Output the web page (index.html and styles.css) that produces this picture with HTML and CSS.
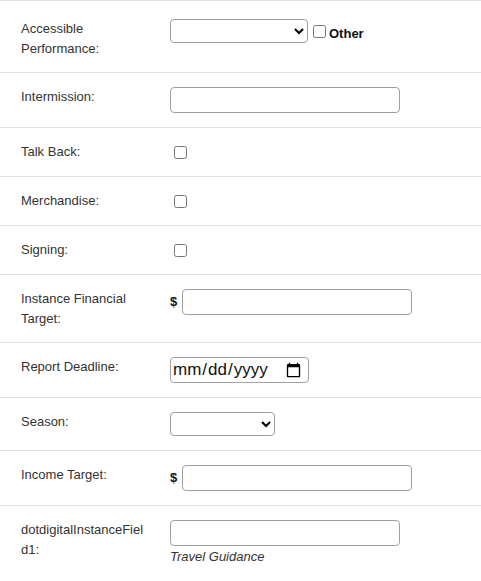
FILE: index.html
```html
<!DOCTYPE html>
<html lang="en">
<head>
   <meta charset="UTF-8">
   <meta name="viewport" content="width=device-width, initial-scale=1.0">
   <title>Instance Details</title>
   <link rel="stylesheet" href="styles.css">
</head>

<body>

   <!-- Instance fields -->
   <table class="fields">
       <tr class="first-row">
           <td class="label">Accessible Performance:</td>
           <td class="control">
               <select class="select-wide"><option></option></select><input type="checkbox" id="other" class="other-check"><label for="other" class="other">Other</label>
           </td>
       </tr>
       <tr>
           <td class="label">Intermission:</td>
           <td class="control"><input type="text" class="text-field"></td>
       </tr>
       <tr>
           <td class="label">Talk Back:</td>
           <td class="control"><input type="checkbox"></td>
       </tr>
       <tr>
           <td class="label">Merchandise:</td>
           <td class="control"><input type="checkbox"></td>
       </tr>
       <tr>
           <td class="label">Signing:</td>
           <td class="control"><input type="checkbox"></td>
       </tr>
       <tr>
           <td class="label">Instance Financial Target:</td>
           <td class="control"><span class="currency">$</span> <input type="text" class="text-field money"></td>
       </tr>
       <tr>
           <td class="label">Report Deadline:</td>
           <td class="control"><input type="date" class="date-field"></td>
       </tr>
       <tr>
           <td class="label">Season:</td>
           <td class="control"><select class="select-small"><option></option></select></td>
       </tr>
       <tr>
           <td class="label">Income Target:</td>
           <td class="control"><span class="currency">$</span> <input type="text" class="text-field money"></td>
       </tr>
       <tr>
           <td class="label">dotdigitalInstanceField1:</td>
           <td class="control">
               <input type="text" class="text-field">
               <div class="hint">Travel Guidance</div>
           </td>
       </tr>
   </table>

</body>
</html>
```

FILE: styles.css
```css
body {
    margin: 0;
    font-family: "Liberation Sans", Arial, sans-serif;
    font-size: 13px;
    color: #333;
    background-color: #fff;
}
.fields {
    width: 100%;
    border-collapse: collapse;
    border-top: 1px solid #e1e1e1;
}
.fields tr {
    border-bottom: 1px solid #e1e1e1;
}
.fields td {
    padding: 14px 0;
    vertical-align: top;
    line-height: 1.5;
}
.first-row td {
    padding-top: 18px;
}
.label {
    width: 128px;
    padding-left: 21px !important;
    padding-right: 21px !important;
    overflow-wrap: anywhere;
}
.control {
    line-height: 1;
}
.text-field {
    box-sizing: border-box;
    width: 230px;
    height: 26px;
    margin: 0;
    border: 1px solid #a0a0a0;
    border-radius: 4px;
    vertical-align: middle;
}
.money {
    margin-left: 1px;
}
select {
    box-sizing: border-box;
    height: 24px;
    margin: 0;
    border: 1px solid #a0a0a0;
    border-radius: 4px;
    background-color: #fff;
    vertical-align: middle;
}
.select-wide {
    width: 138px;
}
.select-small {
    width: 105px;
}
input[type="checkbox"] {
    margin: 3px 3px 3px 4px;
    vertical-align: middle;
}
.other-check {
    margin-left: 5px !important;
}
.other {
    font-weight: bold;
    color: #111;
    vertical-align: -4px;
}
.currency {
    font-weight: bold;
    color: #111;
    vertical-align: middle;
}
.date-field {
    box-sizing: border-box;
    width: 139px;
    height: 26px;
    margin: 0;
    padding: 0 4px 0 1px;
    font-family: "Liberation Sans", Arial, sans-serif;
    font-size: 17px;
    color: #111;
    border: 1px solid #a0a0a0;
    border-radius: 4px;
}
.hint {
    margin-top: 1px;
    font-style: italic;
    line-height: 1.5;
}
```
